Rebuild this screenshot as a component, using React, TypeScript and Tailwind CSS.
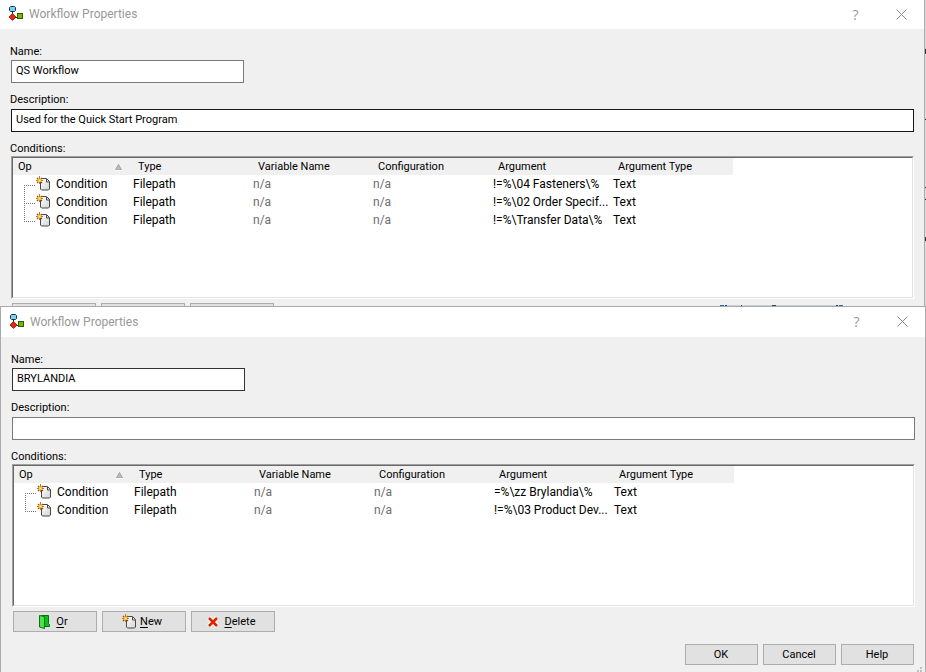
import React from 'react';

interface Condition {
  type: string;
  variable: string;
  configuration: string;
  argument: string;
  argumentType: string;
}

interface WorkflowWindowProps {
  id: string;
  name: string;
  description: string;
  conditions: Condition[];
  covered?: boolean;
  className: string;
  titleClassName: string;
  nameClassName: string;
  descriptionClassName: string;
}

const COLUMNS = ['Op', 'Type', 'Variable Name', 'Configuration', 'Argument', 'Argument Type'];

const filepath = (argument: string): Condition => ({
  type: 'Filepath',
  variable: 'n/a',
  configuration: 'n/a',
  argument,
  argumentType: 'Text',
});

const QS_CONDITIONS = [
  filepath('!=%\\04 Fasteners\\%'),
  filepath('!=%\\02 Order Specif...'),
  filepath('!=%\\Transfer Data\\%'),
];

const BRYLANDIA_CONDITIONS = [
  filepath('=%\\zz Brylandia\\%'),
  filepath('!=%\\03 Product Dev...'),
];

const WorkflowIcon = () => (
  <svg width="16" height="16" viewBox="0 0 16 16" className="shrink-0" aria-hidden="true">
    <path d="M4.5 5v4M7 11.5h3" stroke="#222" fill="none" />
    <path d="M2.5 0.5h4l1 1v3l-1 1h-4l-1-1v-3z" fill="#7fcdf2" stroke="#0f3a52" />
    <path d="M4.5 7.5l3.5 3.5L4.5 14.500 1 11z" fill="#ee2408" stroke="#8e1405" strokeWidth="0.8" />
    <rect x="9.5" y="7.5" width="5" height="5" fill="#78b800" stroke="#33590a" />
  </svg>
);

const NewIcon = () => (
  <svg width="14" height="16" viewBox="0 0 14 16" className="shrink-0" aria-hidden="true">
    <defs>
      <linearGradient id="page" x1="0" y1="0" x2="1" y2="1">
        <stop offset="0" stopColor="#fff" />
        <stop offset="1" stopColor="#d4d4d4" />
      </linearGradient>
    </defs>
    <path d="M4.5 3.5v9.500l1 1h7l1-1v-7.500l-3-3h-5z" fill="url(#page)" stroke="#484848" />
    <path d="M10.5 3v3h3" fill="none" stroke="#484848" />
    <path d="M3.5 0v8M0 4.5h7" stroke="#c87a18" />
    <path d="M1 2l5 5M6 2L1 7" stroke="#a04a14" strokeWidth="1.200" />
    <rect x="2" y="3" width="3" height="3" fill="#ffc62e" />
    <rect x="3" y="4" width="1" height="1" fill="#fff3b0" />
  </svg>
);

const OrIcon = () => (
  <svg width="14" height="16" viewBox="0 0 14 16" className="shrink-0" aria-hidden="true">
    <path d="M3.5 1.5h7v8l1 1v2h-5v-10z" fill="#0fbf14" stroke="#05750b" />
    <path d="M1.5 1.5l5 1v12l-5-1.500z" fill="#4fe052" stroke="#05750b" />
  </svg>
);

const DeleteIcon = () => (
  <svg width="14" height="16" viewBox="0 0 14 16" className="shrink-0" aria-hidden="true">
    <path d="M2 4l8 8M10 4l-8 8" stroke="#fff" strokeWidth="5" />
    <path d="M2 4l8 8M10 4l-8 8" stroke="#e02400" strokeWidth="2.600" />
  </svg>
);

const TreeLine = ({ first, last }: { first: boolean; last: boolean }) => (
  <svg width="12" height="18" viewBox="0 0 12 18" className="shrink-0" aria-hidden="true">
    <path
      d={`M0.5 ${first ? 10 : 0}V${last ? 11 : 18}M0 10.5h12`}
      stroke="#777"
      strokeDasharray="1 1"
      fill="none"
      shapeRendering="crispEdges"
    />
  </svg>
);

const SortArrow = () => (
  <svg width="8" height="8" viewBox="0 0 8 8" aria-hidden="true">
    <path d="M3.5 1.5l3 5.500H0.5z" fill="#bdbdbd" stroke="#a0a0a0" />
    <path d="M0 7.500h8" stroke="#fff" />
  </svg>
);

const TitleBar = ({ className }: { className: string }) => (
  <header className={`flex items-center bg-white pl-2 text-[12px] text-[#999] ${className}`}>
    <WorkflowIcon />
    <h1 className="ml-[5px]">Workflow Properties</h1>
    <div className="ml-auto flex">
      <button type="button" aria-label="Help" className="w-[45px] font-['Open_Sans'] text-[14px]">
        ?
      </button>
      <button type="button" aria-label="Close" className="flex w-[46px] items-center justify-center">
        <svg width="11" height="11" viewBox="0 0 11 11" aria-hidden="true">
          <path d="M0.5 0.5l10 10M10.5 0.5l-10 10" stroke="#8a8a8a" />
        </svg>
      </button>
    </div>
  </header>
);

const ConditionList = ({ conditions }: { conditions: Condition[] }) => (
  <div className="h-[143px] border-t border-l border-[#a0a0a0] border-r border-b border-r-white border-b-white">
    <div className="h-full overflow-hidden border-t border-l border-r border-b border-t-[#696969] border-l-[#696969] border-r-[#e3e3e3] border-b-[#e3e3e3] bg-white">
      <table className="w-[720px] table-fixed border-collapse text-left">
        <thead>
          <tr className="h-[17px] bg-[#f0f0f0]">
            {COLUMNS.map((column, i) => (
              <th key={column} className="p-0 pl-[5px] font-normal leading-4">
                <div className="flex items-center justify-between pt-px pr-[10px]">
                  {column}
                  {i === 0 && <SortArrow />}
                </div>
              </th>
            ))}
          </tr>
        </thead>
        <tbody className="text-[12px] leading-[18px]">
          {conditions.map((condition, i) => (
            <tr key={condition.argument} className="h-[18px]">
              <td className="p-0 pl-[11px]">
                <div className="flex h-[18px] items-center">
                  <TreeLine first={i === 0} last={i === conditions.length - 1} />
                  <NewIcon />
                  <span className="ml-[6px]">Condition</span>
                </div>
              </td>
              <td className="p-0">{condition.type}</td>
              <td className="p-0 text-[#6d6d6d]">{condition.variable}</td>
              <td className="p-0 text-[#6d6d6d]">{condition.configuration}</td>
              <td className="p-0 whitespace-nowrap">{condition.argument}</td>
              <td className="p-0">{condition.argumentType}</td>
            </tr>
          ))}
        </tbody>
      </table>
    </div>
  </div>
);

const buttonClass = 'flex h-[21px] items-center border border-[#adadad] bg-[#e1e1e1]';
const toolButtonClass = `${buttonClass} w-[84px] justify-center gap-1 pr-1`;
const dialogButtonClass = `${buttonClass} w-[73px] justify-center pt-px pr-px`;
const coveredButtonClass = 'h-[3px] w-[84px] border border-b-0 border-[#adadad] bg-[#e1e1e1]';
const inputClass = 'block h-[23px] border bg-white px-1 pb-[2px] outline-none';
const labelClass = '-ml-px block leading-[18px]';

const WorkflowWindow = ({
  id,
  name,
  description,
  conditions,
  covered = false,
  className,
  titleClassName,
  nameClassName,
  descriptionClassName,
}: WorkflowWindowProps) => (
  <section className={`bg-[#f0f0f0] ${className}`}>
    <TitleBar className={titleClassName} />
    <form className="relative pt-[14px] pr-[10px] pl-[11px]">
      <label htmlFor={`${id}-name`} className={`${labelClass} h-[17px]`}>
        Name:
      </label>
      <input id={`${id}-name`} defaultValue={name} className={`${inputClass} w-[233px] ${nameClassName}`} />
      <label htmlFor={`${id}-description`} className={`${labelClass} mt-2 h-[18px]`}>
        Description:
      </label>
      <input
        id={`${id}-description`}
        defaultValue={description}
        className={`${inputClass} w-full ${descriptionClassName}`}
      />
      <p className={`${labelClass} mt-2 h-4`}>Conditions:</p>
      <ConditionList conditions={conditions} />
      {covered ? (
        <div className="mt-1 ml-px flex gap-[5px]">
          <button type="button" aria-label="Or" className={coveredButtonClass} />
          <button type="button" aria-label="New" className={coveredButtonClass} />
          <button type="button" aria-label="Delete" className={coveredButtonClass} />
        </div>
      ) : (
        <>
          <div className="mt-1 ml-px flex gap-[5px]">
            <button type="button" className={toolButtonClass}>
              <OrIcon />
              <span className="pt-px">
                <u className="underline-offset-2">O</u>r
              </span>
            </button>
            <button type="button" className={toolButtonClass}>
              <NewIcon />
              <span className="pt-px">
                <u className="underline-offset-2">N</u>ew
              </span>
            </button>
            <button type="button" className={toolButtonClass}>
              <DeleteIcon />
              <span className="pt-px">
                <u className="underline-offset-2">D</u>elete
              </span>
            </button>
          </div>
          <div className="mt-3 mr-px flex justify-end gap-[5px] pb-[7px]">
            <button type="button" className={dialogButtonClass}>
              OK
            </button>
            <button type="button" className={dialogButtonClass}>
              Cancel
            </button>
            <button type="button" className={dialogButtonClass}>
              Help
            </button>
          </div>
          <svg width="8" height="8" viewBox="0 0 8 8" className="absolute right-0 bottom-0" aria-hidden="true">
            <path d="M3 3h2v2h-2zM0 6h2v2h-2zM3 6h2v2h-2z" fill="#bfbfbf" />
          </svg>
        </>
      )}
    </form>
  </section>
);

export default function App() {
  return (
    <main className="bg-[#dcdcdc] font-['Roboto',sans-serif] text-[11px] text-black">
      <div className="relative">
        <WorkflowWindow
          id="qs"
          name="QS Workflow"
          description="Used for the Quick Start Program"
          conditions={QS_CONDITIONS}
          covered
          className="mr-px border-r border-[#aaa]"
          titleClassName="h-[29px] pb-px"
          nameClassName="border-[#7a7a7a]"
          descriptionClassName="border-[#171717]"
        />
        {/* bits of the desktop behind the two windows */}
        <svg width="123" height="1" className="absolute right-[83px] bottom-0" aria-hidden="true">
          <path d="M0 0h123v1H0z" fill="#c5d3de" />
          <path d="M0 0h4v1H0zM119 0h4v1h-4z" fill="#1f6fa8" />
          <path d="M5 0h2v1H5zM21 0h1v1h-1zM52 0h4v1h-4zM116 0h2v1h-2z" fill="#444" />
        </svg>
        <svg width="1" height="250" className="absolute top-0 right-0" aria-hidden="true">
          <path d="M0 49h1v5H0zM0 119h1v1H0zM0 187h1v1H0zM0 199h1v1H0zM0 237h1v4H0z" fill="#333" />
        </svg>
      </div>
      <WorkflowWindow
        id="brylandia"
        name="BRYLANDIA"
        description=""
        conditions={BRYLANDIA_CONDITIONS}
        className="border-x border-t border-[#aaa]"
        titleClassName="h-[30px] pb-px"
        nameClassName="border-[#333]"
        descriptionClassName="border-[#7a7a7a]"
      />
    </main>
  );
}
